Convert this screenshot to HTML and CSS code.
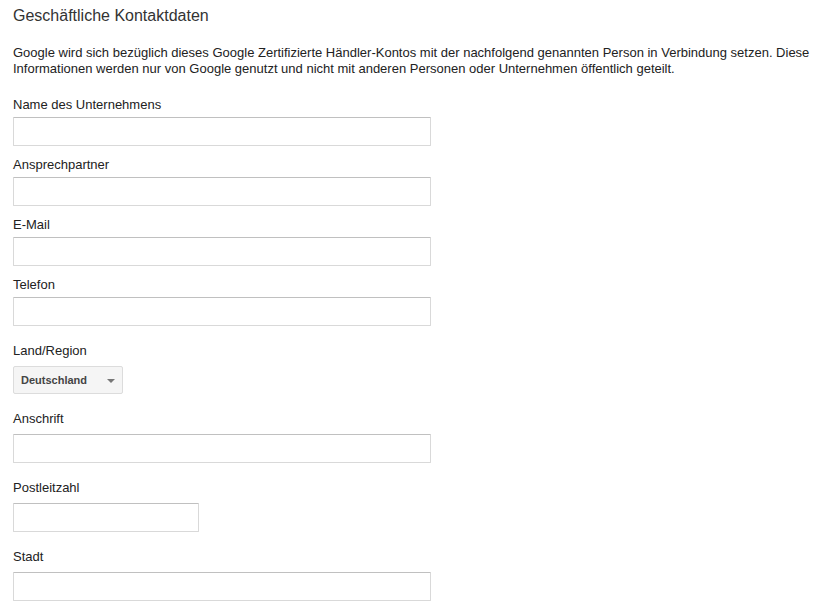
FILE: index.html
```html
<!DOCTYPE html>
<html lang="de">
<head>
    <meta charset="UTF-8">
    <meta name="viewport" content="width=device-width, initial-scale=1.0">
    <title>Geschäftliche Kontaktdaten</title>
    <link rel="stylesheet" href="styles.css">
</head>
<body>
    <main class="kontakt">
        <h1 class="titel">Geschäftliche Kontaktdaten</h1>

        <p class="hinweis">Google wird sich bezüglich dieses Google Zertifizierte Händler-Kontos mit der nachfolgend genannten Person in Verbindung setzen. Diese Informationen werden nur von Google genutzt und nicht mit anderen Personen oder Unternehmen öffentlich geteilt.</p>

        <div class="feld">
            <label for="firma">Name des Unternehmens</label>
            <input type="text" id="firma" class="eingabe">
        </div>
        <div class="feld">
            <label for="ansprechpartner">Ansprechpartner</label>
            <input type="text" id="ansprechpartner" class="eingabe">
        </div>
        <div class="feld">
            <label for="email">E-Mail</label>
            <input type="text" id="email" class="eingabe">
        </div>
        <div class="feld">
            <label for="telefon">Telefon</label>
            <input type="text" id="telefon" class="eingabe">
        </div>

        <!-- Adresse -->
        <div class="feld feld-weit">
            <label>Land/Region</label>
            <div class="auswahl">
                <span>Deutschland</span>
                <span class="pfeil"></span>
            </div>
        </div>
        <div class="feld feld-weit">
            <label for="anschrift">Anschrift</label>
            <input type="text" id="anschrift" class="eingabe">
        </div>
        <div class="feld feld-weit">
            <label for="plz">Postleitzahl</label>
            <input type="text" id="plz" class="eingabe eingabe-kurz">
        </div>
        <div class="feld feld-weit">
            <label for="stadt">Stadt</label>
            <input type="text" id="stadt" class="eingabe">
        </div>
    </main>
</body>
</html>
```

FILE: styles.css
```css
body {
    margin: 0;
    font-family: "Liberation Sans", Arial, sans-serif;
    font-size: 13px;
    color: #222;
    background: #fff;
}

.kontakt {
    padding: 0 13px;
}

.titel {
    margin: 0;
    padding-top: 6px;
    font-size: 16px;
    font-weight: normal;
    line-height: 20px;
    color: #333;
}

.hinweis {
    margin: 19px 0 0;
    line-height: 16px;
}

.feld {
    margin-top: 11px;
}

.hinweis + .feld {
    margin-top: 20px;
}

.feld-weit {
    margin-top: 17px;
}

.feld label {
    display: block;
    line-height: 16px;
    margin-bottom: 4px;
}

.feld-weit label {
    margin-bottom: 7px;
}

.eingabe {
    display: block;
    width: 418px;
    height: 29px;
    box-sizing: border-box;
    margin: 0;
    padding: 0 8px;
    border: 1px solid #d9d9d9;
    border-top-color: #c0c0c0;
    border-radius: 1px;
    font-family: inherit;
    font-size: 13px;
}

.eingabe-kurz {
    width: 186px;
}

/* Auswahlfeld Land */
.auswahl {
    display: flex;
    align-items: center;
    justify-content: space-between;
    width: 110px;
    height: 28px;
    box-sizing: border-box;
    padding: 0 7px 0 7px;
    background: #f5f5f5;
    border: 1px solid #dcdcdc;
    border-radius: 2px;
    font-size: 11px;
    font-weight: bold;
    color: #444;
}

.pfeil {
    width: 0;
    height: 0;
    border-left: 4px solid transparent;
    border-right: 4px solid transparent;
    border-top: 4px solid #777;
    margin-top: 1px;
}
```
